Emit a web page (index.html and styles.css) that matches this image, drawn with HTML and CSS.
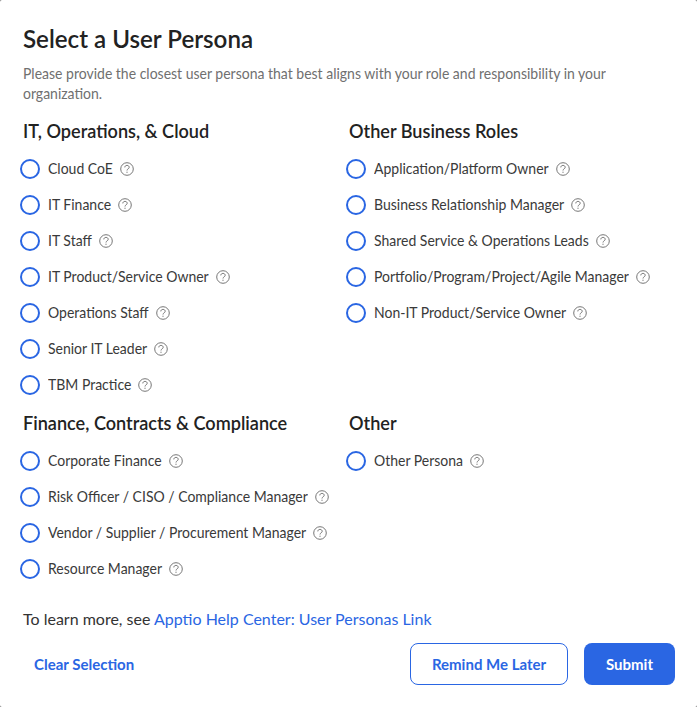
FILE: index.html
```
<!DOCTYPE html>
<html lang="en">
<head>
<meta charset="utf-8">
<title>Select a User Persona</title>
<link rel="stylesheet" href="styles.css">
</head>
<body>
<svg class="defs" width="0" height="0"><symbol id="help" viewBox="0 0 14 14"><circle cx="7" cy="7" r="6.3"/><path d="M4.8 5.4c0-1.2.9-2 2.2-2s2.2.8 2.2 1.9c0 1.5-2.2 1.6-2.2 3.2"/><path d="M7 9.7v1.2"/></symbol></svg>
<main class="dialog">
<h1>Select a User Persona</h1>
<p class="intro">Please provide the closest user persona that best aligns with your role and responsibility in your organization.</p>
<div class="groups">
<section>
<h2>IT, Operations, &amp; Cloud</h2>
<div class="option"><i class="radio"></i><span>Cloud CoE</span><svg class="help"><use href="#help"/></svg></div>
<div class="option"><i class="radio"></i><span>IT Finance</span><svg class="help"><use href="#help"/></svg></div>
<div class="option"><i class="radio"></i><span>IT Staff</span><svg class="help"><use href="#help"/></svg></div>
<div class="option"><i class="radio"></i><span>IT Product/Service Owner</span><svg class="help"><use href="#help"/></svg></div>
<div class="option"><i class="radio"></i><span>Operations Staff</span><svg class="help"><use href="#help"/></svg></div>
<div class="option"><i class="radio"></i><span>Senior IT Leader</span><svg class="help"><use href="#help"/></svg></div>
<div class="option"><i class="radio"></i><span>TBM Practice</span><svg class="help"><use href="#help"/></svg></div>
</section>
<section>
<h2>Other Business Roles</h2>
<div class="option"><i class="radio"></i><span>Application/Platform Owner</span><svg class="help"><use href="#help"/></svg></div>
<div class="option"><i class="radio"></i><span>Business Relationship Manager</span><svg class="help"><use href="#help"/></svg></div>
<div class="option"><i class="radio"></i><span>Shared Service &amp; Operations Leads</span><svg class="help"><use href="#help"/></svg></div>
<div class="option"><i class="radio"></i><span>Portfolio/Program/Project/Agile Manager</span><svg class="help"><use href="#help"/></svg></div>
<div class="option"><i class="radio"></i><span>Non-IT Product/Service Owner</span><svg class="help"><use href="#help"/></svg></div>
</section>
<section>
<h2>Finance, Contracts &amp; Compliance</h2>
<div class="option"><i class="radio"></i><span>Corporate Finance</span><svg class="help"><use href="#help"/></svg></div>
<div class="option"><i class="radio"></i><span>Risk Officer / CISO / Compliance Manager</span><svg class="help"><use href="#help"/></svg></div>
<div class="option"><i class="radio"></i><span>Vendor / Supplier / Procurement Manager</span><svg class="help"><use href="#help"/></svg></div>
<div class="option"><i class="radio"></i><span>Resource Manager</span><svg class="help"><use href="#help"/></svg></div>
</section>
<section>
<h2>Other</h2>
<div class="option"><i class="radio"></i><span>Other Persona</span><svg class="help"><use href="#help"/></svg></div>
</section>
</div>
<p class="learn">To learn more, see <a>Apptio Help Center: User Personas Link</a></p>
<footer>
<button class="clear">Clear Selection</button>
<button class="later">Remind Me Later</button>
<button class="submit">Submit</button>
</footer>
</main>
</body>
</html>
```
FILE: styles.css
```
* { box-sizing: border-box; }
body { margin: 0; background: #777; font-family: Lato, "Liberation Sans", sans-serif; color: #222; }
.defs { display: block; height: 0; }
.dialog { height: 707px; padding: 24px 22px 0 23px; overflow: hidden; background: #fff; border-radius: 2px; }
h1 { margin: 0; font-size: 24.15px; line-height: 30px; font-weight: 600; }
.intro { margin: 10px 0 0; width: 610px; height: 40px; font-size: 14px; line-height: 18.18px; color: #707070; transform: scaleY(1.1); transform-origin: top; }
.groups { display: grid; grid-template-columns: 326px 326px; margin-top: 15px; }
section { height: 184px; }
section:nth-child(-n+2) { height: 292px; }
h2 { margin: 0 0 8px; font-size: 18.1px; line-height: 24px; font-weight: 600; }
.option { display: flex; align-items: center; height: 36px; margin-left: -3px; font-size: 14px; white-space: nowrap; }
.option span { line-height: 18px; padding-bottom: 1px; transform: scaleY(1.1); color: #3a3a3a; }
.radio { width: 20px; height: 20px; border: 2px solid #2a66e3; border-radius: 50%; margin-right: 8px; flex: none; }
.help { width: 14px; height: 14px; margin-left: 7px; fill: none; stroke: #777; stroke-width: 1; flex: none; }
.learn { margin: 12px 0 0; font-size: 16px; line-height: 24px; color: #333; }
.learn a { color: #2a66e3; }
footer { display: flex; align-items: center; height: 42px; margin-top: 12px; }
button { height: 42px; font: 700 15px Lato, sans-serif; border-radius: 8px; padding: 0; }
.clear { border: 0; background: none; color: #2a66e3; padding: 0 11px; margin-right: auto; }
.later { width: 158px; border: 1px solid #2a66e3; background: #fff; color: #2a66e3; margin-right: 16px; }
.submit { width: 91px; border: 0; background: #2a66e3; color: #fff; }
```
